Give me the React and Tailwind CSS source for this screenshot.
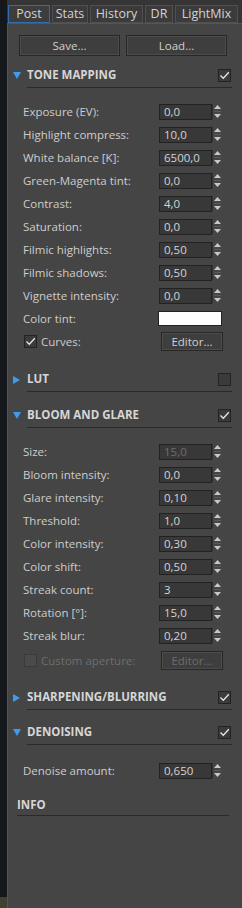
const font = { fontFamily: '"Open Sans", "Noto Sans", sans-serif' };

function Check({ on = true, disabled = false }) {
    return (
        <div className={`w-[13px] h-[13px] border flex items-center justify-center ${disabled ? 'border-[#3a3a3a] bg-[#4a4a4a]' : 'border-[#232323] bg-[#3b3b3b]'}`}>
            {on && (
                <svg width="11" height="11" viewBox="0 0 11 11">
                    <path d="M1.5 5.5 L4.3 8.3 L9.8 2.2" fill="none" stroke="#e6e6e6" strokeWidth="1.3" />
                </svg>
            )}
        </div>
    );
}

function Spinner() {
    return (
        <div className="w-[10px] h-[15px] flex flex-col items-center justify-center gap-[2px] border-l border-[#333]">
            <svg width="7" height="4" viewBox="0 0 7 4"><path d="M0 4 L3.5 0 L7 4 Z" fill="#c8c8c8" /></svg>
            <div className="w-[7px] h-px bg-[#5a5a5a]" />
            <svg width="7" height="4" viewBox="0 0 7 4"><path d="M0 0 L3.5 4 L7 0 Z" fill="#c8c8c8" /></svg>
        </div>
    );
}

function Row({ label, value, disabled = false }) {
    return (
        <div className="h-[23px] flex items-center pl-[15px]">
            <span className="flex-1 text-[11.5px] text-[#cdcdcd]">{label}</span>
            <div className="flex items-center mr-[20px]">
                <div className={`w-[53px] h-[16px] bg-[#383838] border border-[#222] flex items-center pl-[4px] text-[11.5px] ${disabled ? 'text-[#6e6e6e]' : 'text-[#d4d4d4]'}`}>
                    {value}
                </div>
                <Spinner />
            </div>
        </div>
    );
}

// section title: text sits ~10px above its underline
function Header({ title, open = true, checked = null, mt }) {
    return (
        <div className={`h-[23px] flex ${mt}`}>
            <div className="w-[19px] pl-[5px] pb-[2px] flex items-center">
                {open ? (
                    <svg width="8" height="7" viewBox="0 0 8 7"><path d="M0 0 L8 0 L4 7 Z" fill="#3c9cf0" /></svg>
                ) : (
                    <svg width="7" height="8" viewBox="0 0 7 8"><path d="M0 0 L7 4 L0 8 Z" fill="#3c9cf0" /></svg>
                )}
            </div>
            <div className="flex-1 flex items-center pb-[2px] border-b border-[#2a2a2a] mr-[10px] pr-[1px]">
                <span className="flex-1 text-[11.5px] font-bold text-[#d6d6d6]">{title}</span>
                {checked !== null && <Check on={checked} />}
            </div>
        </div>
    );
}

function Btn({ children, className = '', disabled = false }) {
    return (
        <div className={`bg-[#3e3e3e] border border-[#272727] shadow-[inset_0_0_0_1px_#4c4c4c] flex items-center justify-center text-[11.5px] ${disabled ? 'text-[#6c6c6c]' : 'text-[#d0d0d0]'} ${className}`}>
            {children}
        </div>
    );
}

export default function App() {
    const tabs = [
        ['Post', 'w-[42px]'],
        ['Stats', 'w-[36px]'],
        ['History', 'w-[53px]'],
        ['DR', 'w-[28px]'],
        ['LightMix', 'w-[63px]'],
    ];
    return (
        <div className="w-[242px] h-[908px] flex bg-[#14181d] overflow-hidden" style={font}>
            <div className="w-[7px] flex flex-col justify-end">
                <div className="h-[11px] bg-[#3d4232]" />
            </div>
            <div className="flex-1 flex flex-col bg-[#353535]">
                <div className="h-[5px]" />
                <div className="h-[18px] flex items-stretch gap-[2px] pl-[1px]">
                    {tabs.map(([t, w], i) => (
                        <div
                            key={t}
                            className={`${w} flex items-center justify-center text-[12.5px] text-[#d2d2d2] border ${i === 0 ? 'border-[#2f6fae] bg-[#3d3d3d]' : 'border-[#505050] bg-[#3b3b3b]'}`}
                        >
                            {t}
                        </div>
                    ))}
                </div>
                <div className="flex-1 bg-[#454545] border-l border-t border-[#555]">
                    <div className="flex gap-[6px] pl-[11px] pr-[15px] pt-[11px]">
                        <Btn className="flex-1 h-[21px]">Save...</Btn>
                        <Btn className="flex-1 h-[21px]">Load...</Btn>
                    </div>

                    <Header title="TONE MAPPING" checked={true} mt="mt-[9px]" />
                    <div className="mt-[12px]">
                        <Row label="Exposure (EV):" value="0,0" />
                        <Row label="Highlight compress:" value="10,0" />
                        <Row label="White balance [K]:" value="6500,0" />
                        <Row label="Green-Magenta tint:" value="0,0" />
                        <Row label="Contrast:" value="4,0" />
                        <Row label="Saturation:" value="0,0" />
                        <Row label="Filmic highlights:" value="0,50" />
                        <Row label="Filmic shadows:" value="0,50" />
                        <Row label="Vignette intensity:" value="0,0" />
                        <div className="h-[23px] flex items-center pl-[15px]">
                            <span className="flex-1 text-[11.5px] text-[#cdcdcd]">Color tint:</span>
                            <div className="w-[64px] h-[15px] bg-white border border-[#222] mr-[20px]" />
                        </div>
                        <div className="h-[23px] flex items-center pl-[16px]">
                            <Check on={true} />
                            <span className="flex-1 ml-[4px] text-[11.5px] text-[#cdcdcd]">Curves:</span>
                            <Btn className="w-[62px] h-[19px] mr-[19px]">Editor...</Btn>
                        </div>
                    </div>

                    <Header title="LUT" open={false} checked={false} mt="mt-[16px]" />
                    <Header title="BLOOM AND GLARE" checked={true} mt="mt-[13px]" />
                    <div className="mt-[12px]">
                        <Row label="Size:" value="15,0" disabled />
                        <Row label="Bloom intensity:" value="0,0" />
                        <Row label="Glare intensity:" value="0,10" />
                        <Row label="Threshold:" value="1,0" />
                        <Row label="Color intensity:" value="0,30" />
                        <Row label="Color shift:" value="0,50" />
                        <Row label="Streak count:" value="3" />
                        <Row label="Rotation [°]:" value="15,0" />
                        <Row label="Streak blur:" value="0,20" />
                        <div className="h-[23px] flex items-center pl-[16px] mt-[2px]">
                            <Check on={false} disabled />
                            <span className="flex-1 ml-[4px] text-[11.5px] text-[#6e6e6e]">Custom aperture:</span>
                            <Btn className="w-[62px] h-[19px] mr-[19px]" disabled>Editor...</Btn>
                        </div>
                    </div>

                    <Header title="SHARPENING/BLURRING" open={false} checked={true} mt="mt-[15px]" />
                    <Header title="DENOISING" checked={true} mt="mt-[12px]" />
                    <div className="mt-[14px]">
                        <Row label="Denoise amount:" value="0,650" />
                    </div>

                    <div className="mt-[13px] ml-[9px] mr-[13px] h-[21px] pb-[1px] flex items-center border-b border-[#2a2a2a]">
                        <span className="text-[11.5px] font-bold text-[#d6d6d6]">INFO</span>
                    </div>
                </div>
            </div>
        </div>
    );
}
